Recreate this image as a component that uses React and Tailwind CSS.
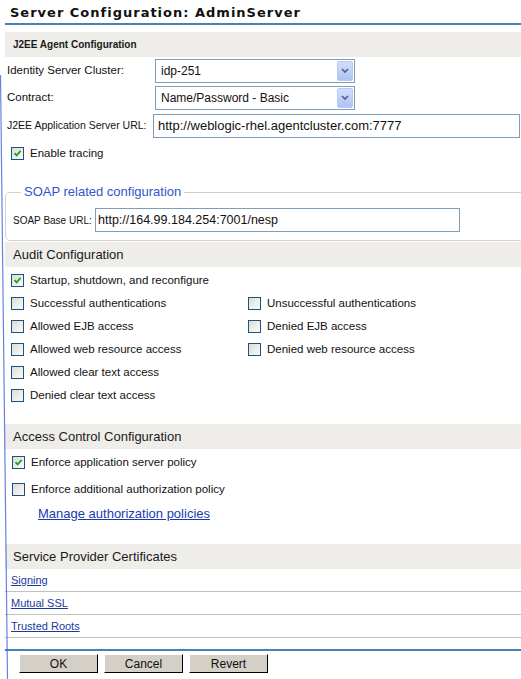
import React from 'react';

const font = { fontFamily: "'Liberation Sans', Arial, sans-serif" };

const Check = ({ checked }) => (
  <span className="relative inline-block w-[13px] h-[13px] border border-[#1c5180] bg-gradient-to-br from-[#dcdcd6] to-[#fbfbf9] flex-shrink-0">
    {checked && (
      <svg viewBox="0 0 11 11" className="absolute inset-0 w-[11px] h-[11px]">
        <path d="M2.5 5.2 L4.6 7.4 L8.6 2.8" fill="none" stroke="#21a121" strokeWidth="1.8" />
      </svg>
    )}
  </span>
);

const CheckRow = ({ label, checked, className = '' }) => (
  <div className={`flex items-center gap-[6px] ${className}`}>
    <Check checked={checked} />
    <span className="text-[11.5px] text-[#111] whitespace-nowrap">{label}</span>
  </div>
);

const Select = ({ value }) => (
  <div className="flex items-center w-[200px] h-[24px] border border-[#7f9db9] bg-white pl-[5px] pr-[1px]">
    <span className="flex-1 text-[12px] text-[#111]">{value}</span>
    <span className="flex items-center justify-center w-[16px] h-[20px] rounded-[2px] border border-[#b8c9f2] bg-gradient-to-b from-[#d2defb] to-[#afc3f3]">
      <svg viewBox="0 0 8 6" className="w-[8px] h-[6px]">
        <path d="M1 1 L4 4 L7 1" fill="none" stroke="#4d6185" strokeWidth="1.6" />
      </svg>
    </span>
  </div>
);

const Header = ({ children, bold }) => (
  <div className={`h-[25px] bg-[#eeede9] flex items-center pl-[8px] text-[#1a1a1a] ${bold ? 'text-[10px] font-bold' : 'text-[13px]'}`}>
    {children}
  </div>
);

const Button = ({ children }) => (
  <button className="w-[79px] h-[19px] bg-[#d4d0c8] border-t border-l border-t-white border-l-white border-r border-b border-r-black border-b-black text-[12px] text-[#111] leading-none">
    {children}
  </button>
);

const CertLink = ({ children }) => (
  <div className="h-[23px] flex items-center pl-[6px] border-b border-[#c2c2ba]">
    <a className="text-[11px] text-[#1a3a9a] underline">{children}</a>
  </div>
);

export default function App() {
  return (
    <div className="relative w-[521px] h-[679px] overflow-hidden bg-white" style={font}>
      <div className="ml-[5px]">
        {/* Title */}
        <div className="h-[23px] flex items-center pl-[5px] pt-[3px]">
          <h1
            className="text-[13px] font-bold tracking-[1px] text-[#111]"
            style={{ fontFamily: "'DejaVu Sans', Verdana, sans-serif" }}
          >
            Server Configuration: AdminServer
          </h1>
        </div>
        <div className="h-[2px] bg-[#4682b4]" />

        {/* J2EE */}
        <div className="mt-[7px]">
          <Header bold>J2EE Agent Configuration</Header>
        </div>
        <div className="pl-[2px]">
          <div className="mt-[2px] h-[24px] flex items-center">
            <span className="w-[148px] shrink-0 whitespace-nowrap text-[11.5px] text-[#111]">Identity Server Cluster:</span>
            <Select value="idp-251" />
          </div>
          <div className="mt-[3px] h-[24px] flex items-center">
            <span className="w-[148px] shrink-0 whitespace-nowrap text-[11.5px] text-[#111]">Contract:</span>
            <Select value="Name/Password - Basic" />
          </div>
          <div className="mt-[4px] h-[24px] flex items-center pr-[1px]">
            <span className="w-[146px] shrink-0 whitespace-nowrap text-[10.5px] text-[#111]">J2EE Application Server URL:</span>
            <div className="flex-1 h-[24px] border border-[#7f9db9] flex items-center pl-[4px] text-[13px] text-[#111]">
              http://weblogic-rhel.agentcluster.com:7777
            </div>
          </div>
          <CheckRow className="mt-[9px] h-[13px] pl-[4px]" checked label="Enable tracing" />
        </div>

        {/* SOAP fieldset */}
        <fieldset className="mt-[24px] -mr-[12px] border border-[#d4d0c8] rounded-[5px] pl-[7px] pb-[8px] pt-[8px]">
          <legend className="ml-[8px] px-[3px] text-[13px] text-[#3355cc] leading-[16px]">SOAP related configuration</legend>
          <div className="flex items-center h-[24px]">
            <span className="w-[82px] shrink-0 whitespace-nowrap text-[10px] text-[#111]">SOAP Base URL:</span>
            <div className="w-[365px] h-[24px] border border-[#7f9db9] flex items-center pl-[2px] text-[12.5px] text-[#111]">
              http://164.99.184.254:7001/nesp
            </div>
          </div>
        </fieldset>

        {/* Audit */}
        <div className="mt-[1px]">
          <Header>Audit Configuration</Header>
        </div>
        <div className="pt-[2px] pl-[6px]">
          <div className="grid grid-cols-[237px_1fr]">
            <CheckRow className="h-[23px]" checked label="Startup, shutdown, and reconfigure" />
            <div />
            <CheckRow className="h-[23px]" label="Successful authentications" />
            <CheckRow className="h-[23px]" label="Unsuccessful authentications" />
            <CheckRow className="h-[23px]" label="Allowed EJB access" />
            <CheckRow className="h-[23px]" label="Denied EJB access" />
            <CheckRow className="h-[23px]" label="Allowed web resource access" />
            <CheckRow className="h-[23px]" label="Denied web resource access" />
            <CheckRow className="h-[23px]" label="Allowed clear text access" />
            <div />
            <CheckRow className="h-[23px]" label="Denied clear text access" />
            <div />
          </div>
        </div>

        {/* Access control */}
        <div className="mt-[17px]">
          <Header>Access Control Configuration</Header>
        </div>
        <div className="pl-[7px]">
          <CheckRow className="h-[27px]" checked label="Enforce application server policy" />
          <CheckRow className="h-[27px]" label="Enforce additional authorization policy" />
          <div className="h-[21px] flex items-center pl-[26px]">
            <a className="text-[13px] text-[#1a3ab0] underline">Manage authorization policies</a>
          </div>
        </div>

        {/* Certificates */}
        <div className="mt-[20px]">
          <Header>Service Provider Certificates</Header>
        </div>
        <CertLink>Signing</CertLink>
        <CertLink>Mutual SSL</CertLink>
        <CertLink>Trusted Roots</CertLink>
        <div className="mt-[11px] h-[2px] bg-[#4682b4]" />
        <div className="mt-[3px] ml-[14px] flex gap-[6px]">
          <Button>OK</Button>
          <Button>Cancel</Button>
          <Button>Revert</Button>
        </div>
      </div>

      {/* stray selection line along the left edge */}
      <svg className="absolute left-0 top-0 w-[10px] h-[679px] pointer-events-none" viewBox="0 0 10 679">
        <line x1="0.5" y1="75" x2="7.5" y2="679" stroke="#3f64dc" strokeWidth="1.2" strokeOpacity="0.8" />
      </svg>
    </div>
  );
}
